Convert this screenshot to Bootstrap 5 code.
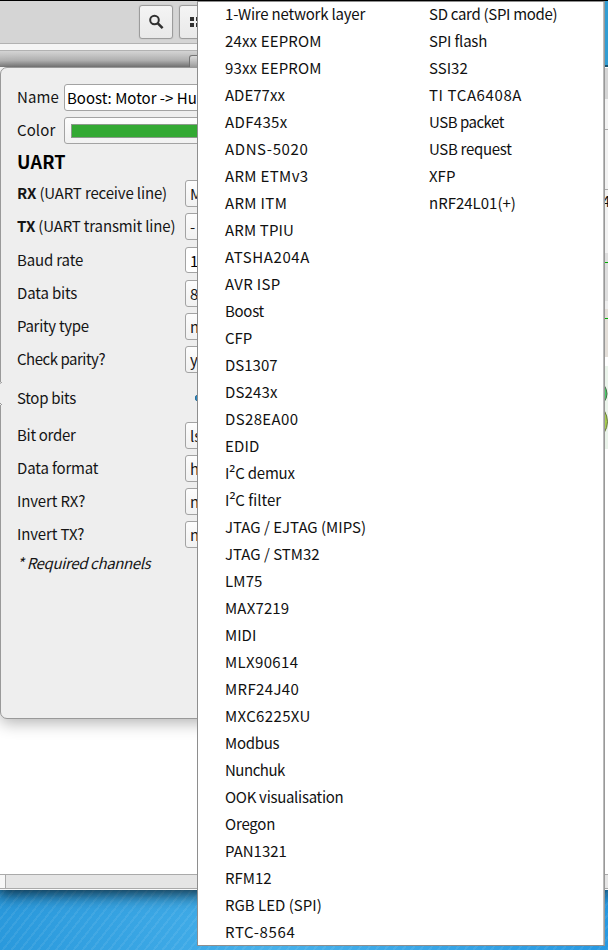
<!DOCTYPE html>
<html lang="en">
<head>
<meta charset="utf-8">
<meta name="viewport" content="width=device-width, initial-scale=1">
<title>Protocol decoders</title>
<link href="https://cdn.jsdelivr.net/npm/bootstrap@5.3.0/dist/css/bootstrap.min.css" rel="stylesheet">
<style>
body{width:608px;height:950px;font-family:"Noto Sans CJK SC","Noto Sans",sans-serif;font-size:15px;line-height:27px;color:#151515;white-space:nowrap;
background:repeating-linear-gradient(128deg,transparent 0 5px,rgba(255,255,255,.07) 5px 7px),linear-gradient(90deg,#2a99dc,#47b1eb 45%,#2799e2)}
.win{width:608px;height:890px;background:#fff;box-shadow:0 1px 15px 3px rgba(0,0,0,.75)}
.toolbar{height:43px;background:#d5d5d5;border-top:1px solid #000;padding:4px 0 0 139px;gap:6px}
.tool{width:34px;height:34px;border:1px solid #9c9c9c;border-radius:3px;background:linear-gradient(#f4f4f4,#e9e9e9);box-shadow:0 0 1px #999}
.strip{height:8px;background:#f5f5f5;border-top:1px solid #b2b2b2;border-bottom:1px solid #b2b2b2}
.tabs-bg{height:16px;background:linear-gradient(#d4d4d4,#b2b2b2 60%,#7b7b7b);padding:4px 0 0 189px}
.tabbox{height:12px;width:30px;background:linear-gradient(#ddd,#aaa);border:1px solid #777;border-bottom:0;border-radius:3px 0 0 0}
.canvas-area{height:807px}
.scroll{height:15px;background:#e5e5e5;border-top:1px solid #aaa;border-bottom:1px solid #aaa}
.grip{width:6px;background:#f7f7f7;border-right:1px solid #aaa}
.pop{left:0;top:67px;width:300px;height:652px;background:#eee;border:1px solid #999;border-radius:7px;padding:16px 0 0 16px;box-shadow:0 4px 16px rgba(0,0,0,.3)}
.form-line{height:27px;margin-bottom:6px}
.lab{width:168px;letter-spacing:-.15px;line-height:26px}.lab-s{width:47px;letter-spacing:.1px;line-height:26px}
.box{height:27px;border:1px solid #a3a3a3;border-radius:3px;background:linear-gradient(#fdfdfd,#f1f1f1);padding-left:4px;line-height:25px}
.entry{background:#fff;padding-left:2px;color:#000}
.baud{padding-top:1px;height:28px;margin-bottom:6px}
.baud .box{height:26px;padding-left:4px}
.swatch{height:14px;margin:6px 0 0 2px;background:#33a933;border:1px solid #8b9a8b}
.head{font-size:18px;font-weight:600;height:30px;line-height:23px;color:#000;letter-spacing:.2px}
.stop{height:37px}
.knob{width:9px;height:6px;border-radius:2px;background:#2e8ac4;border:1px solid #286d98;margin-left:10px}
.req{line-height:20px;margin-top:-1px;letter-spacing:-.37px}
.notch{left:0;top:382px;width:2px;height:23px}
.menu{left:197px;top:1px;width:408px;height:945px;background:#fff;border:1px solid #8e8e8e;border-right-color:#999;box-shadow:inset -1px 0 #bbb;color:#111}
.first{width:204px;padding-left:27px;margin-top:-2px}
.second{padding-left:27px;margin-top:-2px}
.w1{letter-spacing:.15px}.w3{letter-spacing:.35px}.w6{letter-spacing:.6px}
.n2{letter-spacing:-.2px}.n3{letter-spacing:-.3px}.n5{letter-spacing:-.48px}
.sq{font:17px/0 "Noto Sans",sans-serif;letter-spacing:0}
.edge{left:605px;top:1px;width:3px;height:889px;overflow:hidden}
</style>
<script src="https://cdn.jsdelivr.net/npm/bootstrap@5.3.0/dist/js/bootstrap.bundle.min.js"></script>
</head>
<body class="position-relative overflow-hidden m-0">
<div class="win d-flex flex-column">
<div class="toolbar d-flex"><div class="tool d-flex align-items-center justify-content-center"><svg width="16" height="16" viewBox="0 0 16 16" fill="none" stroke="#303030"><circle cx="6.5" cy="6" r="4.3" stroke-width="2"/><path d="M9.6 9.1l5 5" stroke-width="2.5"/></svg></div>
<div class="tool d-flex align-items-center ps-2"><svg width="20" height="16" viewBox="0 0 20 16" fill="#303030"><path d="M2 3h4v4H2zM8 3h4v4H8zM2 9h4v4H2zM8 9h4v4H8z"/></svg></div></div>
<div class="strip"></div><div class="tabs-bg"><div class="tabbox"></div></div>
<div class="canvas-area"></div><div class="scroll d-flex"><div class="grip"></div></div><div class="bg-light flex-fill"></div>
</div>
<div class="pop position-absolute">
<div class="form-line d-flex"><div class="lab-s">Name</div><div class="box entry flex-fill">Boost: Motor -&gt; Hub</div></div>
<div class="form-line d-flex"><div class="lab-s">Color</div><div class="box flex-fill"><div class="swatch"></div></div></div>
<div class="head">UART</div>
<div class="form-line d-flex"><div class="lab"><b>RX</b> (UART receive line)</div><div class="box flex-fill">MRX</div></div>
<div class="form-line d-flex"><div class="lab"><b>TX</b> (UART transmit line)</div><div class="box flex-fill">-</div></div>
<div class="baud d-flex"><div class="lab">Baud rate</div><div class="box entry flex-fill">115200</div></div>
<div class="form-line d-flex"><div class="lab">Data bits</div><div class="box flex-fill">8</div></div>
<div class="form-line d-flex"><div class="lab n3">Parity type</div><div class="box flex-fill">none</div></div>
<div class="form-line d-flex"><div class="lab n5">Check parity?</div><div class="box flex-fill">yes</div></div>
<div class="form-line stop d-flex align-items-center"><div class="lab n3">Stop bits</div><div class="knob"></div></div>
<div class="form-line d-flex"><div class="lab n3">Bit order</div><div class="box flex-fill">lsb-first</div></div>
<div class="form-line d-flex"><div class="lab">Data format</div><div class="box flex-fill">hex</div></div>
<div class="form-line d-flex"><div class="lab">Invert RX?</div><div class="box flex-fill">no</div></div>
<div class="form-line d-flex"><div class="lab">Invert TX?</div><div class="box flex-fill">no</div></div>
<div class="req"><i>* Required channels</i></div>
</div>
<svg class="notch position-absolute" viewBox="0 0 2 23"><path d="M0 0h2v23H0z" fill="#eee"/><path d="M0 1.5L2 0M0 21l2 2" stroke="#999"/></svg>
<svg class="edge position-absolute" viewBox="605 1 3 889"><path fill="#319dd3" d="M605 1h3v66h-3z"/><path fill="#19536f" d="M605 65h3v2h-3z"/><path fill="#d5d5d5" d="M605 68h3v31h-3z"/><path fill="#f2f2f2" d="M605 99h3v154h-3z"/><path fill="#aaa" d="M605 129h3v1h-3zM605 189h3v1h-3z"/><path fill="#dedede" d="M605 253h3v48h-3z"/><path fill="#eee" d="M605 301h3v8h-3z"/><path fill="#e3ded8" d="M605 309h3v48h-3z"/><path fill="#eaf3ea" d="M605 366h3v83h-3z"/><path fill="#00ad00" d="M605 262h3v1h-3zM605 318h3v1h-3z"/><path fill="#46ca68" stroke="#456b45" d="M604 385q6 9 0 17z"/><path fill="#a8ce50" stroke="#65753d" d="M604 410q7 12 0 23z"/><text x="602" y="207" font-size="15" fill="#111">4</text></svg>
<div class="menu position-absolute d-flex">
<div class="first"><div class="n2">1-Wire network layer</div><div class="w1">24xx EEPROM</div><div class="w1">93xx EEPROM</div><div>ADE77xx</div><div class="w3">ADF435x</div><div class="w6">ADNS-5020</div><div class="w3">ARM ETMv3</div><div class="w3">ARM ITM</div><div class="w1">ARM TPIU</div><div class="w6">ATSHA204A</div><div class="w3">AVR ISP</div><div class="n3">Boost</div><div>CFP</div><div>DS1307</div><div class="w1">DS243x</div><div class="w3">DS28EA00</div><div class="w1">EDID</div><div class="n2">I<span class="sq">²</span>C demux</div><div>I<span class="sq">²</span>C filter</div><div>JTAG / EJTAG (MIPS)</div><div>JTAG / STM32</div><div class="w1">LM75</div><div class="w1">MAX7219</div><div>MIDI</div><div class="w3">MLX90614</div><div class="w3">MRF24J40</div><div class="w3">MXC6225XU</div><div class="n3">Modbus</div><div class="n5">Nunchuk</div><div class="n3">OOK visualisation</div><div class="n2">Oregon</div><div>PAN1321</div><div>RFM12</div><div>RGB LED (SPI)</div><div class="w6">RTC-8564</div></div>
<div class="second"><div class="n3">SD card (SPI mode)</div><div class="n2">SPI flash</div><div>SSI32</div><div class="w6">TI TCA6408A</div><div class="n5">USB packet</div><div class="n3">USB request</div><div>XFP</div><div>nRF24L01(+)</div></div>
</div>
</body>
</html>
